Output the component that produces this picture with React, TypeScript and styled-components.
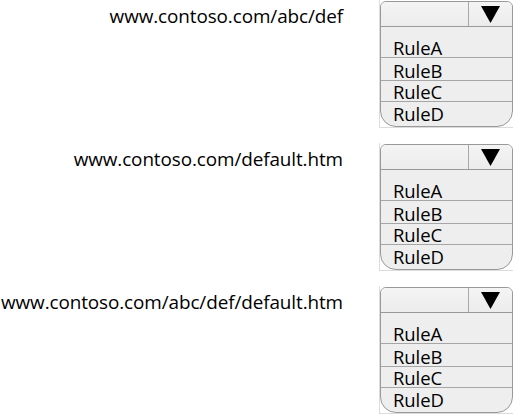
import { Fragment } from "react";
import styled, { createGlobalStyle } from "styled-components";

const Global = createGlobalStyle`
  body {
    margin: 0;
    background: #fff;
    font-family: "Open Sans", "Noto Sans", sans-serif;
    color: #000;
  }
`;

const Page = styled.div`
  display: grid;
  grid-template-columns: 343px 134px;
  grid-auto-rows: 143px;
  column-gap: 36px;
  width: 515px;
  height: 415px;
  overflow: hidden;
`;

const Url = styled.div`
  text-align: right;
  font-size: 18.9px;
  line-height: 20px;
  padding-top: 6px;
  white-space: nowrap;
  letter-spacing: -0.1px;
`;

const Frame = styled.div`
  width: 134px;
  height: 128px;
  box-sizing: border-box;
  border-left: 1px solid #dcdcdc;
  border-bottom: 1px solid #dcdcdc;
  padding-top: 1px;
`;

const Box = styled.div`
  width: 133px;
  height: 126px;
  box-sizing: border-box;
  border: 1px solid #999;
  border-radius: 6px 6px 16px 16px;
  background: #eeeeee;
  overflow: hidden;
  display: flex;
  flex-direction: column;
`;

const Head = styled.div`
  display: grid;
  grid-template-columns: 88px 1fr;
  height: 24px;
  border-bottom: 1px solid #999;
  background: linear-gradient(#f4f4f4, #ececec);
`;

const Field = styled.div`
  border-right: 1px solid #a8a8a8;
`;

const Arrow = styled.div`
  display: flex;
  align-items: center;
  justify-content: center;
`;

const Item = styled.div<{ $h: number; $last?: boolean }>`
  height: ${(p) => p.$h}px;
  box-sizing: border-box;
  padding-left: 12px;
  padding-bottom: ${(p) => (p.$last ? 4 : 1)}px;
  display: flex;
  align-items: flex-end;
  font-size: 18.5px;
  line-height: 16px;
  letter-spacing: -0.1px;
  border-bottom: ${(p) => (p.$last ? "none" : "1px solid #a6a6a6")};
`;

const urls = [
  "www.contoso.com/abc/def",
  "www.contoso.com/default.htm",
  "www.contoso.com/abc/def/default.htm",
];

const rules = [
  { name: "RuleA", h: 31 },
  { name: "RuleB", h: 23 },
  { name: "RuleC", h: 21 },
  { name: "RuleD", h: 24 },
];

const Dropdown = () => (
  <Frame>
    <Box>
      <Head>
        <Field />
        <Arrow>
          <svg width="19" height="18" viewBox="0 0 19 18">
            <polygon points="0,1 19,1 9.5,18" fill="#000" />
          </svg>
        </Arrow>
      </Head>
      {rules.map((r, i) => (
        <Item key={r.name} $h={r.h} $last={i === rules.length - 1}>
          {r.name}
        </Item>
      ))}
    </Box>
  </Frame>
);

export default function App() {
  return (
    <>
      <Global />
      <Page>
        {urls.map((u) => (
          <Fragment key={u}>
            <Url>{u}</Url>
            <Dropdown />
          </Fragment>
        ))}
      </Page>
    </>
  );
}
